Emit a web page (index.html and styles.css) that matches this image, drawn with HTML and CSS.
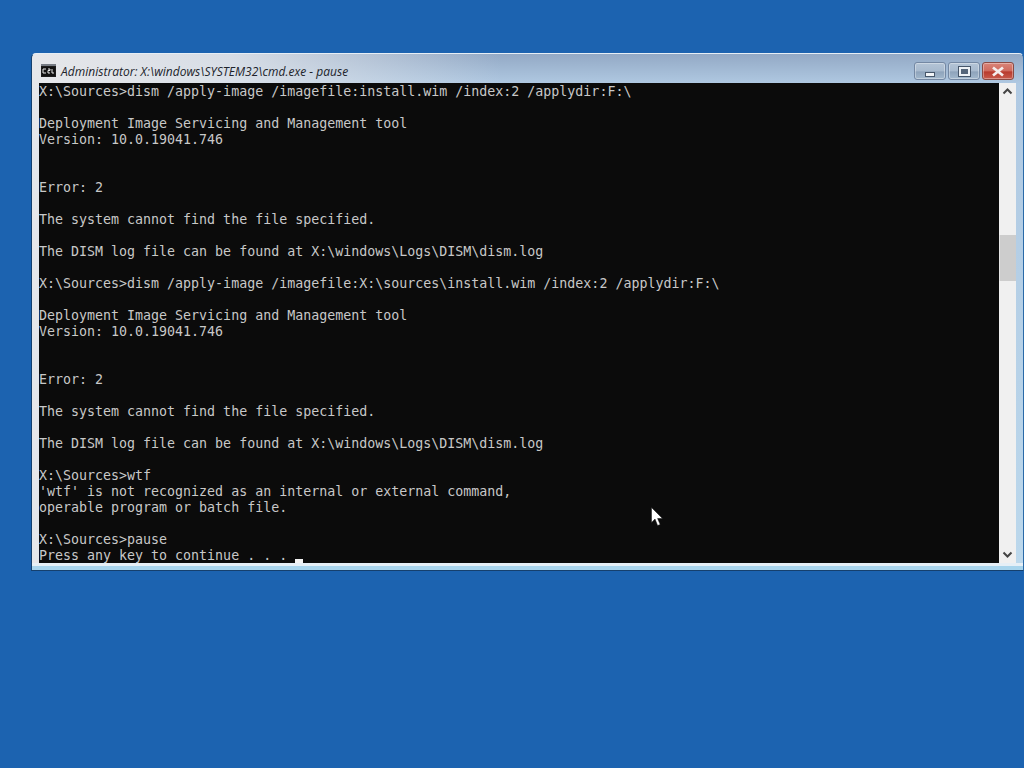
FILE: index.html
```html
<!DOCTYPE html>
<html lang="en">
<head>
<meta charset="utf-8">
<title>cmd.exe</title>
<link rel="stylesheet" href="styles.css">
</head>
<body>
<div class="window">
  <div class="titlebar">
    <svg class="app-icon" width="16" height="16" viewBox="0 0 16 16">
      <rect x="0" y="1" width="15" height="13" fill="#1c1c1c"/>
      <rect x="0" y="1" width="15" height="2" fill="#777c84"/>
      <rect x="1" y="4" width="13" height="9" fill="#111"/>
      <path d="M2 6h3M2 10h3M2 6v4M7 6h2v1.5H7v2.500h2M11 6v4h2" stroke="#e8e8e8" fill="none"/>
    </svg>
    <span class="title">Administrator: X:\windows\SYSTEM32\cmd.exe - pause</span>
    <div class="controls">
      <div class="btn"><span class="min-glyph"></span></div>
      <div class="btn"><span class="max-glyph"></span></div>
      <div class="btn close">
        <svg width="16" height="11" viewBox="0 0 16 11"><path d="M3 1.500l10 8M13 1.500l-10 8" stroke="#f4eeee" stroke-width="2.800" fill="none"/></svg>
      </div>
    </div>
  </div>
  <div class="client">
    <pre class="console">X:\Sources&gt;dism /apply-image /imagefile:install.wim /index:2 /applydir:F:\

Deployment Image Servicing and Management tool
Version: 10.0.19041.746


Error: 2

The system cannot find the file specified.

The DISM log file can be found at X:\windows\Logs\DISM\dism.log

X:\Sources&gt;dism /apply-image /imagefile:X:\sources\install.wim /index:2 /applydir:F:\

Deployment Image Servicing and Management tool
Version: 10.0.19041.746


Error: 2

The system cannot find the file specified.

The DISM log file can be found at X:\windows\Logs\DISM\dism.log

X:\Sources&gt;wtf
'wtf' is not recognized as an internal or external command,
operable program or batch file.

X:\Sources&gt;pause
Press any key to continue . . . <span class="cursor"></span></pre>
    <div class="scrollbar">
      <svg class="arrow" width="17" height="17" viewBox="0 0 17 17"><path d="M4.500 10.500l4-4 4 4" stroke="#444" stroke-width="2" fill="none"/></svg>
      <div class="track"><div class="thumb"></div></div>
      <svg class="arrow" width="17" height="17" viewBox="0 0 17 17"><path d="M4.500 6.500l4 4 4-4" stroke="#444" stroke-width="2" fill="none"/></svg>
    </div>
    <svg class="pointer" width="12" height="20" viewBox="0 0 12 20"><path d="M0.500 0.500v15l3.500-3.500 2.600 6.500 2.600-1-2.600-6h4.900z" fill="#fff" stroke="#111" stroke-width="0.500"/></svg>
  </div>
</div>
</body>
</html>
```
FILE: styles.css
```css
* { box-sizing: border-box; }
html, body { margin: 0; height: 100%; }
body {
  background: #1c63b0;
  overflow: hidden;
  padding: 53px 0 0 31px;
}
.window {
  width: 993px;
  height: 518px;
  border: 1px solid #15406e;
  border-top-color: #e6eef5;
  border-right-color: #2a6aa8;
  border-radius: 5px 5px 0 0;
  background:
    linear-gradient(90deg, #e6e7ea 0, rgba(226,229,234,0.85) 200px, rgba(170,190,210,0) 470px),
    linear-gradient(180deg, #93a9c5 0, #b0c9e2 30px, #bcd8ec 100%);
  padding: 0 7px 7px 7px;
  display: flex;
  flex-direction: column;
  box-shadow: inset 0 -4px 0 #a8d4ec, inset 0 -7px 0 #e6eff6;
}
.titlebar {
  height: 29px;
  flex: none;
  display: flex;
  align-items: center;
  gap: 4px;
  padding: 5px 0 0 2px;
}
.app-icon { flex: none; }
.title {
  font: italic 12px "Open Sans", "Liberation Sans", sans-serif;
  color: #20232a;
  letter-spacing: 0.02px;
}
.controls {
  margin-left: auto;
  display: flex;
  gap: 2px;
  align-self: flex-start;
  margin-top: 3px;
  margin-right: 2px;
}
.btn {
  width: 32px;
  height: 18px;
  border: 1px solid #7488a3;
  border-radius: 3px;
  background: linear-gradient(180deg, #b4c4d6 0%, #a8bace 50%, #8ea3bb 55%, #a2b8cd 100%);
  box-shadow: inset 0 0 0 1px rgba(255,255,255,0.35);
  display: flex;
  align-items: center;
  justify-content: center;
}
.close {
  background: linear-gradient(180deg, #d98478 0%, #cf6a5e 50%, #b83a2e 55%, #c85a4c 100%);
  border-color: #8a4a44;
}
.min-glyph {
  width: 10px;
  height: 5px;
  margin-top: 6px;
  border: 1px solid #46566a;
  background: #f2f5f8;
}
.max-glyph {
  width: 11px;
  height: 9px;
  border: 2px solid #eef2f6;
  outline: 1px solid #46566a;
  background: #56667a;
}
.client {
  position: relative;
  display: flex;
  flex: 1;
  min-height: 0;
}
.console {
  width: 960px;
  height: 480px;
  margin: 0;
  padding-top: 1px;
  background: #0b0b0b;
  color: #c8c8c8;
  font: 13.3px/16px "DejaVu Sans Mono", "Liberation Mono", monospace;
  overflow: hidden;
}
.cursor {
  display: inline-block;
  width: 8px;
  height: 4px;
  background: #f2f2f2;
  vertical-align: -3px;
}
.scrollbar {
  width: 17px;
  height: 480px;
  background: #f0f0f0;
  display: flex;
  flex-direction: column;
}
.arrow { flex: none; }
.track {
  flex: 1;
  padding-top: 135px;
}
.thumb {
  height: 46px;
  background: #cdcdcd;
  border-left: 1px solid #e4e4e4;
}
.pointer {
  position: absolute;
  left: 612px;
  top: 424px;
}
```
